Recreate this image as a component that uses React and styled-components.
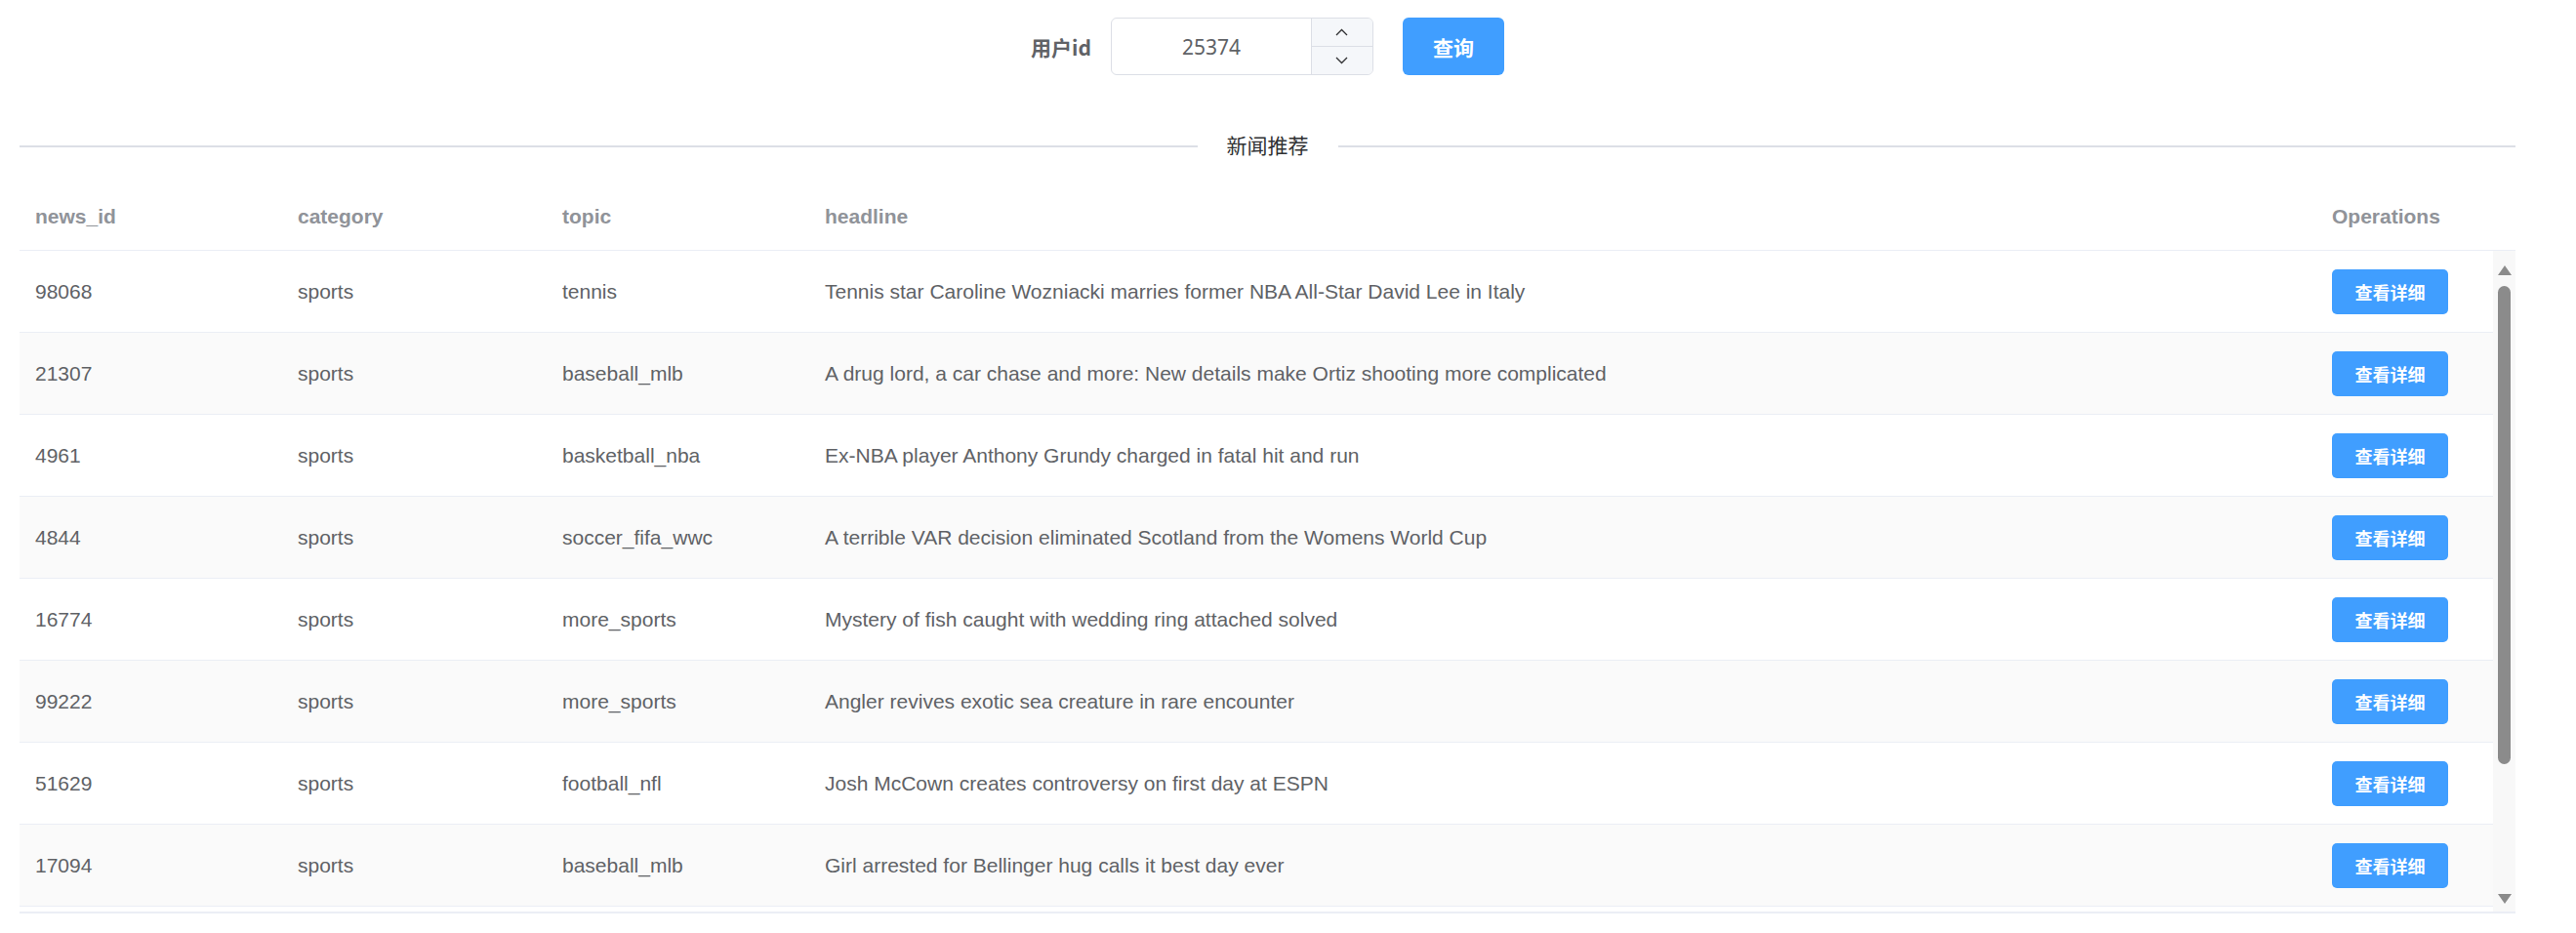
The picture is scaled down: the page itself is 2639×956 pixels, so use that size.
import React from 'react';
import styled, { createGlobalStyle } from 'styled-components';

const GlobalStyle = createGlobalStyle`
    html, body {
        margin: 0;
        padding: 0;
        background: #fff;
    }
    body {
        font-family: "Liberation Sans", Arial, "Noto Sans CJK SC", sans-serif;
        color: #606266;
    }
`;

const news = [
    { id: '98068', category: 'sports', topic: 'tennis', headline: 'Tennis star Caroline Wozniacki marries former NBA All-Star David Lee in Italy' },
    { id: '21307', category: 'sports', topic: 'baseball_mlb', headline: 'A drug lord, a car chase and more: New details make Ortiz shooting more complicated' },
    { id: '4961', category: 'sports', topic: 'basketball_nba', headline: 'Ex-NBA player Anthony Grundy charged in fatal hit and run' },
    { id: '4844', category: 'sports', topic: 'soccer_fifa_wwc', headline: 'A terrible VAR decision eliminated Scotland from the Womens World Cup' },
    { id: '16774', category: 'sports', topic: 'more_sports', headline: 'Mystery of fish caught with wedding ring attached solved' },
    { id: '99222', category: 'sports', topic: 'more_sports', headline: 'Angler revives exotic sea creature in rare encounter' },
    { id: '51629', category: 'sports', topic: 'football_nfl', headline: 'Josh McCown creates controversy on first day at ESPN' },
    { id: '17094', category: 'sports', topic: 'baseball_mlb', headline: 'Girl arrested for Bellinger hug calls it best day ever' },
];

const COLS = '269px 271px 269px 1fr 181px';

const Page = styled.div`
    padding: 18px 62px 0 20px;
`;

const SearchForm = styled.form`
    display: flex;
    justify-content: center;
    align-items: center;
    height: 59px;
`;

const Label = styled.label`
    font-family: "Noto Sans CJK SC", "Noto Sans", sans-serif;
    font-size: 21px;
    font-weight: 700;
    color: #606266;
    padding-right: 20px;
`;

const NumberInput = styled.div`
    display: flex;
    width: 269px;
    height: 59px;
    box-sizing: border-box;
    border: 1.5px solid #dcdfe6;
    border-radius: 6px;
    overflow: hidden;
`;

const InputText = styled.div`
    flex: 1;
    display: flex;
    align-items: center;
    justify-content: center;
    font-family: "Noto Sans", sans-serif;
    font-size: 21px;
    color: #606266;
`;

const Spin = styled.div`
    width: 62px;
    display: flex;
    flex-direction: column;
    border-left: 1.5px solid #dcdfe6;
    background: #f5f7fa;
`;

const SpinButton = styled.div`
    flex: 1;
    display: flex;
    align-items: center;
    justify-content: center;
    border-top: ${p => (p.$bottom ? '1.5px solid #dcdfe6' : 'none')};
`;

const QueryButton = styled.button`
    margin-left: 30px;
    width: 104px;
    height: 59px;
    border: none;
    border-radius: 6px;
    background: #409eff;
    color: #fff;
    font-family: "Noto Sans CJK SC", sans-serif;
    font-size: 21px;
    font-weight: 600;
    cursor: pointer;
`;

const Divider = styled.div`
    display: flex;
    align-items: center;
    height: 22px;
    margin: 62px 0 22px;

    &::before, &::after {
        content: '';
        flex: 1;
        height: 2px;
        background: #dcdfe6;
    }
`;

const DividerTitle = styled.span`
    padding: 0 30px 4px;
    font-family: "Noto Sans CJK SC", sans-serif;
    font-size: 21px;
    font-weight: 400;
    color: #303133;
    line-height: 22px;
`;

const Table = styled.div`
    border-bottom: 2px solid #ebeef5;
`;

const HeadRow = styled.div`
    display: grid;
    grid-template-columns: ${COLS} 23px;
    height: 74px;
    padding-top: 4px;
    align-items: center;
    border-bottom: 1.5px solid #ebeef5;
    box-sizing: border-box;
`;

const HeadCell = styled.div`
    padding-left: 16px;
    font-size: 21px;
    font-weight: 700;
    color: #909399;
`;

const BodyWrap = styled.div`
    display: flex;
    height: 677px;
`;

const BodyScroll = styled.div`
    flex: 1;
    overflow: hidden;
`;

const Row = styled.div`
    display: grid;
    grid-template-columns: ${COLS};
    height: 84px;
    align-items: center;
    box-sizing: border-box;
    border-bottom: 1.5px solid #ebeef5;
    background: ${p => (p.$striped ? '#fafafa' : '#fff')};
`;

const Cell = styled.div`
    padding-left: 16px;
    font-size: 21px;
    color: #606266;
    white-space: nowrap;
`;

const DetailButton = styled.button`
    width: 119px;
    height: 46px;
    border: none;
    border-radius: 5px;
    background: #409eff;
    color: #fff;
    font-family: "Noto Sans CJK SC", sans-serif;
    font-size: 18px;
    font-weight: 600;
    cursor: pointer;
`;

const Rail = styled.div`
    width: 23px;
    background: #f8f8f8;
    display: flex;
    flex-direction: column;
    align-items: center;
    padding: 15px 0 8px;
    box-sizing: border-box;
`;

const RailSpace = styled.div`
    flex: 1;
`;

const Arrow = styled.div`
    width: 0;
    height: 0;
    border-left: 7px solid transparent;
    border-right: 7px solid transparent;
    ${p => (p.$down ? 'border-top: 10px solid #8b8b8b;' : 'border-bottom: 10px solid #8b8b8b;')}
`;

const Thumb = styled.div`
    width: 13px;
    height: 490px;
    margin-top: 11px;
    border-radius: 7px;
    background: #8b8b8b;
`;

const Chevron = ({ down }) => (
    <svg width="13" height="8" viewBox="0 0 13 8" fill="none">
        <polyline
            points={down ? '1,1 6.5,6.5 12,1' : '1,7 6.5,1.5 12,7'}
            stroke="#303133"
            strokeWidth="1.3"
        />
    </svg>
);

const App = () => {
    return (
        <Page>
            <GlobalStyle />
            <SearchForm onSubmit={e => e.preventDefault()}>
                <Label>用户id</Label>
                <NumberInput>
                    <InputText>25374</InputText>
                    <Spin>
                        <SpinButton><Chevron /></SpinButton>
                        <SpinButton $bottom><Chevron down /></SpinButton>
                    </Spin>
                </NumberInput>
                <QueryButton type="submit">查询</QueryButton>
            </SearchForm>

            <Divider>
                <DividerTitle>新闻推荐</DividerTitle>
            </Divider>

            <Table>
                <HeadRow>
                    <HeadCell>news_id</HeadCell>
                    <HeadCell>category</HeadCell>
                    <HeadCell>topic</HeadCell>
                    <HeadCell>headline</HeadCell>
                    <HeadCell>Operations</HeadCell>
                    <div />
                </HeadRow>
                <BodyWrap>
                    <BodyScroll>
                        {news.map((item, i) => (
                            <Row key={item.id} $striped={i % 2 === 1}>
                                <Cell>{item.id}</Cell>
                                <Cell>{item.category}</Cell>
                                <Cell>{item.topic}</Cell>
                                <Cell>{item.headline}</Cell>
                                <Cell><DetailButton>查看详细</DetailButton></Cell>
                            </Row>
                        ))}
                        <Row />
                    </BodyScroll>
                    <Rail>
                        <Arrow />
                        <Thumb />
                        <RailSpace />
                        <Arrow $down />
                    </Rail>
                </BodyWrap>
            </Table>
        </Page>
    );
};

export default App;
